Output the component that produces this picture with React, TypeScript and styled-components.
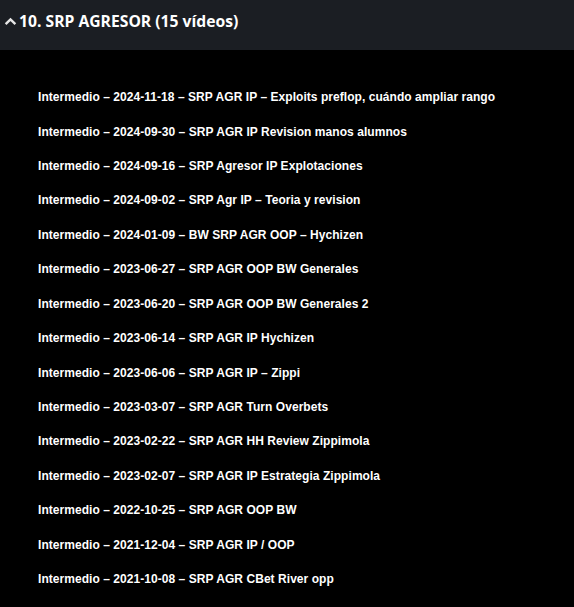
import React from "react";
import styled, { createGlobalStyle } from "styled-components";

const Global = createGlobalStyle`
  html, body { margin: 0; padding: 0; background: #000; }
  body { width: 574px; height: 607px; overflow: hidden; }
`;

const Page = styled.div`
  width: 574px;
  height: 607px;
  background: #000;
  display: flex;
  flex-direction: column;
`;

const Header = styled.div`
  height: 50px;
  flex: 0 0 50px;
  background: #1b1e23;
  display: flex;
  align-items: flex-start;
  padding: 10px 0 0 4px;
  box-sizing: border-box;
  gap: 2px;
`;

const Caret = styled.svg`
  width: 13px;
  height: 13px;
  margin-top: 5px;
`;

const Title = styled.h2`
  margin: 0;
  font-family: "Open Sans", "Liberation Sans", sans-serif;
  font-weight: 700;
  font-size: 15.7px;
  line-height: 23px;
  color: #ffffff;
`;

const List = styled.ul`
  list-style: none;
  margin: 0;
  padding: 30px 0 0 38px;
`;

const Item = styled.li`
  height: 34.43px;
  display: flex;
  align-items: center;
  font-family: "Liberation Sans", "Noto Sans", sans-serif;
  font-weight: 700;
  font-size: 12px;
  letter-spacing: 0.05px;
  color: #ffffff;
  white-space: nowrap;
`;

const items = [
  "Intermedio – 2024-11-18 – SRP AGR IP – Exploits preflop, cuándo ampliar rango",
  "Intermedio – 2024-09-30 – SRP AGR IP Revision manos alumnos",
  "Intermedio – 2024-09-16 – SRP Agresor IP Explotaciones",
  "Intermedio – 2024-09-02 – SRP Agr IP – Teoria y revision",
  "Intermedio – 2024-01-09 – BW SRP AGR OOP – Hychizen",
  "Intermedio – 2023-06-27 – SRP AGR OOP BW Generales",
  "Intermedio – 2023-06-20 – SRP AGR OOP BW Generales 2",
  "Intermedio – 2023-06-14 – SRP AGR IP Hychizen",
  "Intermedio – 2023-06-06 – SRP AGR IP – Zippi",
  "Intermedio – 2023-03-07 – SRP AGR Turn Overbets",
  "Intermedio – 2023-02-22 – SRP AGR HH Review Zippimola",
  "Intermedio – 2023-02-07 – SRP AGR IP Estrategia Zippimola",
  "Intermedio – 2022-10-25 – SRP AGR OOP BW",
  "Intermedio – 2021-12-04 – SRP AGR IP / OOP",
  "Intermedio – 2021-10-08 – SRP AGR CBet River opp",
];

export default function App() {
  return (
    <>
      <Global />
      <Page>
        <Header>
          <Caret viewBox="0 0 12 12">
            <path d="M1.5 8.5 L6 4 L10.5 8.5" fill="none" stroke="#e6e6e6" strokeWidth="2.2" />
          </Caret>
          <Title>10. SRP AGRESOR (15 vídeos)</Title>
        </Header>
        <List>
          {items.map((t) => (
            <Item key={t}>{t}</Item>
          ))}
        </List>
      </Page>
    </>
  );
}
